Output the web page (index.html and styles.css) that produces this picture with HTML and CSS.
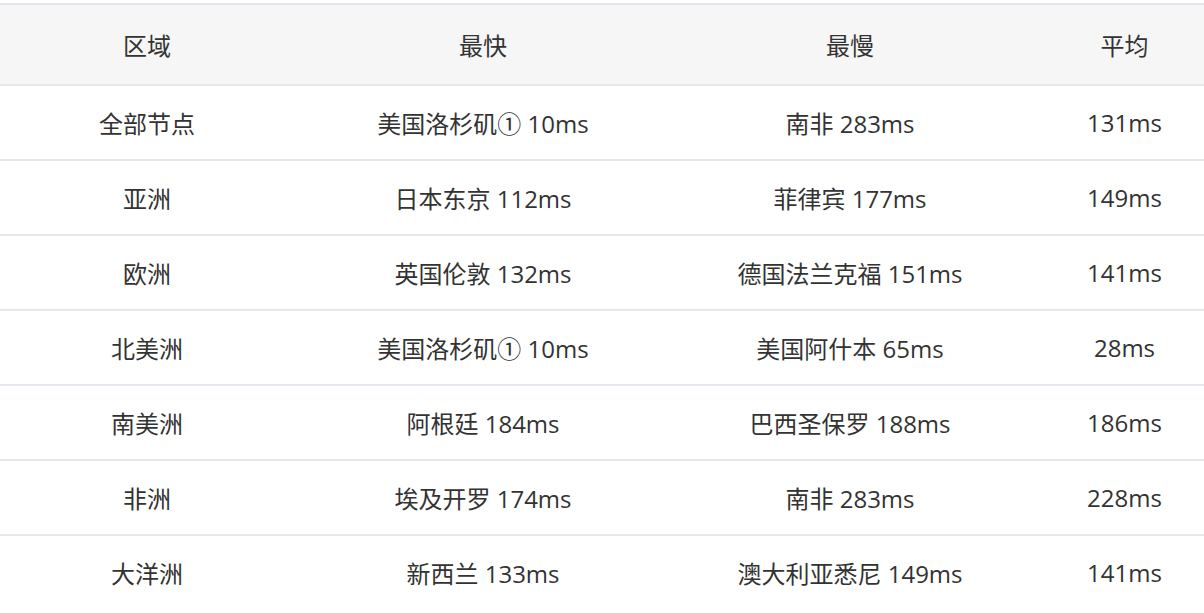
FILE: index.html
```html
<!DOCTYPE html>
<html lang="zh-CN">
<head>
<meta charset="utf-8">
<title>延迟统计</title>
<link rel="stylesheet" href="styles.css">
</head>
<body>
<div class="wrap">
<table class="latency">
  <colgroup>
    <col class="c1"><col class="c2"><col class="c3"><col class="c4">
  </colgroup>
  <thead>
    <tr><th>区域</th><th>最快</th><th>最慢</th><th>平均</th></tr>
  </thead>
  <tbody>
    <tr><td>全部节点</td><td>美国洛杉矶① 10ms</td><td>南非 283ms</td><td>131ms</td></tr>
    <tr><td>亚洲</td><td>日本东京 112ms</td><td>菲律宾 177ms</td><td>149ms</td></tr>
    <tr><td>欧洲</td><td>英国伦敦 132ms</td><td>德国法兰克福 151ms</td><td>141ms</td></tr>
    <tr><td>北美洲</td><td>美国洛杉矶① 10ms</td><td>美国阿什本 65ms</td><td>28ms</td></tr>
    <tr><td>南美洲</td><td>阿根廷 184ms</td><td>巴西圣保罗 188ms</td><td>186ms</td></tr>
    <tr><td>非洲</td><td>埃及开罗 174ms</td><td>南非 283ms</td><td>228ms</td></tr>
    <tr><td>大洋洲</td><td>新西兰 133ms</td><td>澳大利亚悉尼 149ms</td><td>141ms</td></tr>
  </tbody>
</table>
</div>
</body>
</html>
```
FILE: styles.css
```css
html, body {
  margin: 0;
  padding: 0;
  background: #fff;
  overflow: hidden;
}
.wrap {
  padding-top: 3px;
  width: 1221px;
}
.latency {
  width: 1221px;
  border-collapse: collapse;
  table-layout: fixed;
  font-family: "Open Sans", "Noto Sans CJK SC", sans-serif;
  font-size: 24px;
  color: #333;
}
.c1 { width: 294px; }
.c2 { width: 378px; }
.c3 { width: 356px; }
.c4 { width: 193px; }
.latency th,
.latency td {
  text-align: center;
  padding: 0;
  font-weight: normal;
  border-top: 2px solid #e3e8ee;
  white-space: nowrap;
}
.latency th {
  height: 79px;
  background: #f6f6f6;
  border-bottom: 2px solid #e3e8ee;
}
.latency td {
  height: 73px;
}
.latency tbody tr:first-child td {
  border-top: none;
}
```
